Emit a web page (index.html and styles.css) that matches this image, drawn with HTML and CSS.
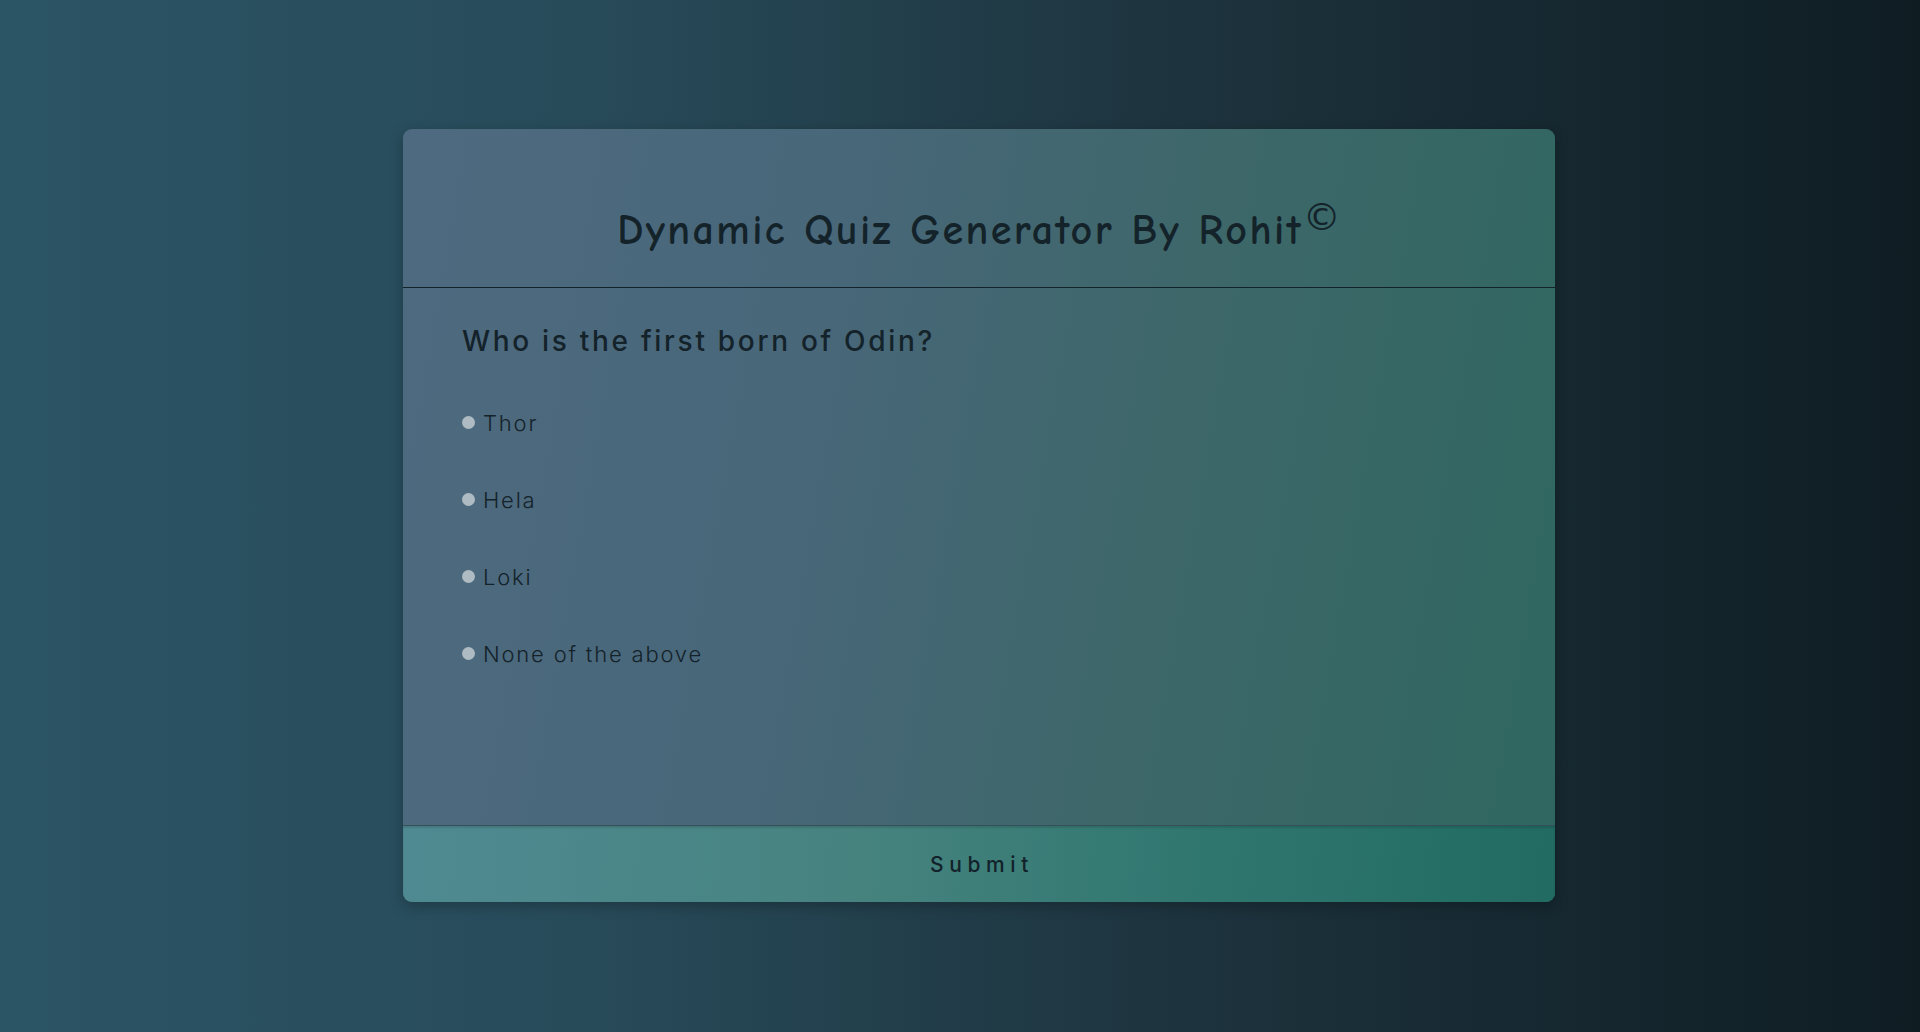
FILE: index.html
```html
<!DOCTYPE html>
<html lang="en">
<head>
<meta charset="utf-8">
<title>Dynamic Quiz Generator</title>
<link rel="stylesheet" href="styles.css">
</head>
<body>
<main class="stage">
  <section class="quiz">
    <header class="quiz-head">
      <h1 class="quiz-title">Dynamic Quiz Generator By Rohit<sup class="copy">©</sup></h1>
    </header>
    <div class="quiz-body">
      <h2 class="question">Who is the first born of Odin?</h2>
      <ul class="answers">
        <li class="answer"><span class="dot"></span><label>Thor</label></li>
        <li class="answer"><span class="dot"></span><label>Hela</label></li>
        <li class="answer"><span class="dot"></span><label>Loki</label></li>
        <li class="answer"><span class="dot"></span><label>None of the above</label></li>
      </ul>
    </div>
    <button class="submit" type="button">Submit</button>
  </section>
</main>
</body>
</html>
```
FILE: styles.css
```css
* { box-sizing: border-box; }
html, body { margin: 0; height: 100%; }
body {
  background: linear-gradient(90deg, #2b5465 0%, #284b5a 30%, #1c313b 65%, #0f1d23 100%);
  font-family: "Inter", "Noto Sans", sans-serif;
  color: #14222a;
  overflow: hidden;
}
.stage {
  display: flex;
  padding: 129px 0 0 403px;
}
.quiz {
  width: 1152px;
  height: 773px;
  border-radius: 9px;
  overflow: hidden;
  display: flex;
  flex-direction: column;
  background: linear-gradient(100deg, #4e6a80 0%, #486779 35%, #3d6769 65%, #2f6760 100%);
  box-shadow: 0 4px 14px rgba(0,0,0,0.25);
}
.quiz-head {
  height: 159px;
  border-bottom: 1px solid #13232b;
  display: flex;
  align-items: center;
  justify-content: center;
  padding-top: 44px;
}
.quiz-title {
  margin: 0;
  font-family: "Comic Sans MS", "Comic Neue", cursive;
  font-weight: bold;
  font-size: 42px;
  letter-spacing: 2.4px;
  color: #14232a;
}
.copy {
  font-family: "DejaVu Sans", sans-serif;
  font-size: 38px;
  font-weight: normal;
  letter-spacing: 0;
  vertical-align: 14px;
  line-height: 0;
}
.quiz-body {
  flex: 1;
  padding: 36px 59px 0;
}
.question {
  margin: 0;
  font-family: "Inter", sans-serif;
  font-weight: 500;
  font-size: 28px;
  letter-spacing: 2.7px;
  color: #14222a;
}
.answers {
  list-style: none;
  margin: 50px 0 0;
  padding: 0;
  display: flex;
  flex-direction: column;
  gap: 47px;
}
.answer {
  display: flex;
  align-items: center;
  gap: 8px;
  height: 30px;
  font-family: "Inter", sans-serif;
  font-size: 22px;
  font-weight: 300;
  letter-spacing: 1.8px;
  color: #14222a;
}
.dot {
  width: 13px;
  height: 13px;
  border-radius: 50%;
  background: #aebbc2;
  margin-top: -2px;
}
.submit {
  height: 77px;
  border: 0;
  border-top: 1px solid #35505a;
  box-shadow: inset 0 2px 2px rgba(0,0,0,0.12);
  background: linear-gradient(95deg, #4f8a92 0%, #46837f 40%, #2f766f 70%, #216b62 100%);
  font-family: "Inter", sans-serif;
  font-size: 21px;
  font-weight: 500;
  letter-spacing: 5.6px;
  color: #13222a;
  padding: 0 0 0 6px;
}
```
